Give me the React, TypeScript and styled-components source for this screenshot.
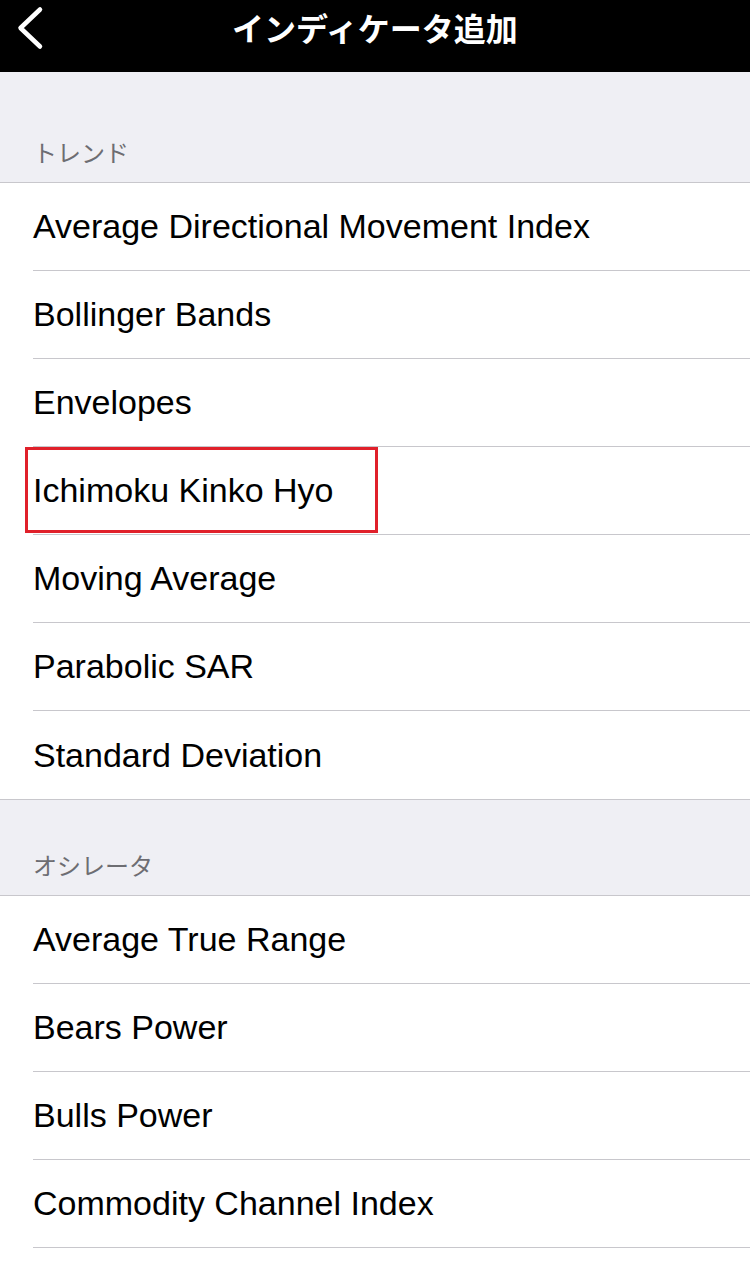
import React from "react";
import styled, { createGlobalStyle } from "styled-components";

const Global = createGlobalStyle`
  html, body { margin: 0; padding: 0; background: #efeff4; }
  body { font-family: "Liberation Sans", "Noto Sans CJK JP", sans-serif; }
`;

const Page = styled.div`
  width: 750px;
  height: 1278px;
  overflow: hidden;
  background: #efeff4;
`;

const NavBar = styled.header`
  height: 72px;
  background: #000;
  display: flex;
  align-items: center;
  justify-content: center;
  position: relative;
`;

const BackButton = styled.button`
  position: absolute;
  left: 0;
  top: 0;
  width: 56px;
  height: 56px;
  background: none;
  border: none;
  padding: 0;
  display: block;
`;

const Title = styled.h1`
  margin: 0;
  color: #fff;
  font-family: "Noto Sans CJK JP", sans-serif;
  font-weight: 700;
  font-size: 32px;
  line-height: 1;
  margin-top: -18px;
`;

const SectionHeader = styled.div<{ $top: number }>`
  height: ${(p) => p.$top}px;
  box-sizing: border-box;
  display: flex;
  align-items: flex-end;
  padding: 0 0 18px 33px;
  color: #6d6d72;
  font-family: "Noto Sans CJK JP", sans-serif;
  font-size: 24px;
  line-height: 1;
  border-bottom: 1px solid #c8c7cc;
`;

const List = styled.ul`
  list-style: none;
  margin: 0;
  padding: 0 0 0 33px;
  background: #fff;
  border-bottom: 1px solid #c8c7cc;
`;

const Row = styled.li<{ $last?: boolean }>`
  height: 88px;
  box-sizing: border-box;
  display: flex;
  align-items: center;
  font-size: 34px;
  color: #000;
  border-bottom: ${(p) => (p.$last ? "none" : "1px solid #c8c7cc")};
  position: relative;
`;

const Highlight = styled.span`
  position: absolute;
  left: -8px;
  top: 0px;
  width: 353px;
  height: 86px;
  box-sizing: border-box;
  border: 3px solid #e0202a;
`;

const trend = [
  "Average Directional Movement Index",
  "Bollinger Bands",
  "Envelopes",
  "Ichimoku Kinko Hyo",
  "Moving Average",
  "Parabolic SAR",
  "Standard Deviation",
];

const osc = [
  "Average True Range",
  "Bears Power",
  "Bulls Power",
  "Commodity Channel Index",
  "DeMarker",
];

export default function App() {
  return (
    <Page>
      <Global />
      <NavBar>
        <BackButton aria-label="back">
          <svg width="56" height="56" viewBox="0 0 56 56">
            <path d="M40 9.5 L20.5 28 L40 46.5" fill="none" stroke="#fff" strokeWidth="4.5" strokeLinecap="round" strokeLinejoin="round" />
          </svg>
        </BackButton>
        <Title>インディケータ追加</Title>
      </NavBar>
      <SectionHeader $top={111}>トレンド</SectionHeader>
      <List>
        {trend.map((t, i) => (
          <Row key={t} $last={i === trend.length - 1}>
            {t === "Ichimoku Kinko Hyo" && <Highlight />}
            {t}
          </Row>
        ))}
      </List>
      <SectionHeader $top={96}>オシレータ</SectionHeader>
      <List>
        {osc.map((t) => (
          <Row key={t}>{t}</Row>
        ))}
      </List>
    </Page>
  );
}
